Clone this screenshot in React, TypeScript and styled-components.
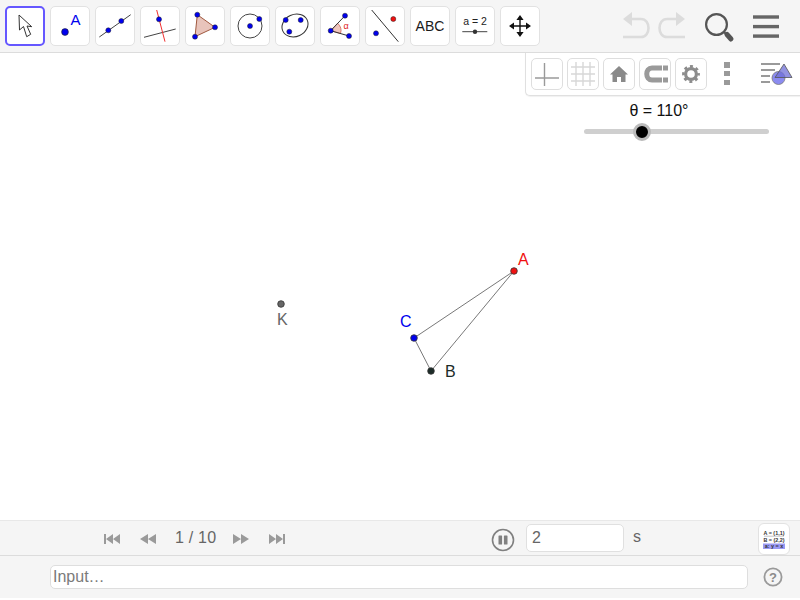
import React from 'react'
import styled, { createGlobalStyle } from 'styled-components'

const GlobalStyle = createGlobalStyle`
  html, body {
    margin: 0;
    padding: 0;
    background: #fff;
    font-family: 'Liberation Sans', Arial, sans-serif;
  }
  * {
    box-sizing: border-box;
  }
`

const Page = styled.div`
  width: 800px;
  height: 600px;
  display: flex;
  flex-direction: column;
  overflow: hidden;
`

const Toolbar = styled.div`
  height: 53px;
  flex: none;
  display: flex;
  align-items: flex-start;
  padding: 6px 0 0 5px;
  background: #f5f5f5;
  border-bottom: 1px solid #dcdcdc;
`

const ToolGroup = styled.div`
  display: flex;
  gap: 5px;
`

const ToolButton = styled.div<{ $active?: boolean }>`
  width: 40px;
  height: 40px;
  display: flex;
  align-items: center;
  justify-content: center;
  background: #fff;
  border-radius: 5px;
  border: ${p => (p.$active ? '2px solid #6557ff' : '1px solid #e2e2e2')};
  color: #1a1a1a;
  font-size: 14px;
  svg {
    display: block;
    flex: none;
  }
`

const ToolActions = styled.div`
  margin-left: 81px;
  display: flex;
  align-items: flex-start;
  svg {
    display: block;
  }
`

const SearchIcon = styled.svg`
  margin-left: 15px;
`

const MenuIcon = styled.svg`
  margin-left: 14px;
`

const Canvas = styled.div`
  position: relative;
  flex: 1;
  background: #fff;
`

const Drawing = styled.svg`
  position: absolute;
  left: 0;
  top: -53px;
  width: 800px;
  height: 600px;
  font-size: 16px;
`

const StylePanel = styled.div`
  position: absolute;
  top: 0;
  right: 0;
  width: 275px;
  height: 43px;
  display: flex;
  align-items: flex-start;
  gap: 4px;
  padding: 5px 0 0 5px;
  background: #fff;
  border-left: 1px solid #e0e0e0;
  border-bottom: 1px solid #e0e0e0;
  border-bottom-left-radius: 5px;
  box-shadow: 0 1px 1px rgba(0, 0, 0, 0.06);
`

const StyleButton = styled.div`
  width: 32px;
  height: 32px;
  border: 1px solid #dedede;
  border-radius: 5px;
  svg {
    display: block;
  }
`

const Kebab = styled.div`
  margin: 4px 0 0 13px;
  display: flex;
  flex-direction: column;
  gap: 3.4px;
`

const KebabDot = styled.span`
  width: 6px;
  height: 5.5px;
  background: #9a9a9a;
`

const ViewIcon = styled.svg`
  display: block;
  margin-left: 27px;
`

const SliderBox = styled.div`
  position: absolute;
  left: 584px;
  top: 48px;
  width: 185px;
  display: flex;
  flex-direction: column;
  align-items: center;
`

const SliderLabel = styled.div`
  font-size: 16px;
  line-height: 20px;
  color: #111;
  margin-left: -35px;
`

const SliderTrack = styled.div`
  position: relative;
  width: 100%;
  height: 5px;
  margin-top: 8px;
  background: #cfcfcf;
  border-radius: 3px;
`

const SliderThumb = styled.span`
  position: absolute;
  left: 49px;
  top: -6.5px;
  width: 18px;
  height: 18px;
  border-radius: 50%;
  background: #000;
  border: 3px solid #bbb;
`

const PlayerBar = styled.div`
  height: 36px;
  flex: none;
  display: flex;
  align-items: center;
  background: #f5f5f5;
  border-top: 1px solid #e8e8e8;
  border-bottom: 1px solid #dcdcdc;
  color: #666;
  font-size: 16px;
`

const StepGroup = styled.div`
  margin: 2px 0 0 104px;
  display: flex;
  align-items: center;
  gap: 20px;
  svg {
    display: block;
  }
`

const PageCount = styled.span`
  width: 41px;
  margin: -3px -3px 0 -1px;
  white-space: nowrap;
  letter-spacing: 0.2px;
`

const PauseIcon = styled.svg`
  display: block;
  margin: 4px 0 0 206px;
`

const SpeedInput = styled.input`
  width: 98px;
  height: 28px;
  margin: 0 0 0 11px;
  padding: 0 0 1px 5px;
  border: 1px solid #e0e0e0;
  border-radius: 5px;
  background: #fff;
  color: #666;
  font: 16px 'Liberation Sans', Arial, sans-serif;
  outline: none;
`

const SpeedUnit = styled.span`
  margin: -2px 0 0 9px;
`

const AlgebraButton = styled.div`
  margin: 2px 10px 0 auto;
  width: 32px;
  height: 32px;
  background: #fff;
  border: 1px solid #e2e2e2;
  border-radius: 6px;
  svg {
    display: block;
  }
`

const InputBar = styled.div`
  height: 42px;
  flex: none;
  display: flex;
  align-items: flex-start;
  padding: 9px 0 0 50px;
  background: #f5f5f5;
`

const InputField = styled.input`
  width: 698px;
  height: 24px;
  padding: 0 0 0 2px;
  border: 1px solid #dedede;
  border-radius: 5px;
  background: #fff;
  font: 16px 'Liberation Sans', Arial, sans-serif;
  outline: none;
  &::placeholder {
    color: #7a7a7a;
    opacity: 1;
  }
`

const HelpIcon = styled.svg`
  display: block;
  margin: 2px 0 0 15px;
`

const Spacer = styled.div`
  height: 2px;
  flex: none;
  background: #fff;
`

const BLUE = '#0000ee'

const Dot = ({ x, y, fill = BLUE, r = 2.5 }: { x: number; y: number; fill?: string; r?: number }) => (
  <circle cx={x} cy={y} r={r} fill={fill} stroke="#222" strokeWidth={0.5} />
)

const Icon: React.FC<{ children: React.ReactNode }> = ({ children }) => (
  <svg width="38" height="38" viewBox="1 1 38 38">
    {children}
  </svg>
)

const Step = ({ d }: { d: string }) => (
  <svg width="16" height="12" viewBox="0 0 16 12">
    <path d={d} fill="#9a9a9a" />
  </svg>
)

export default function App() {
  return (
    <Page>
      <GlobalStyle />
      <Toolbar>
        <ToolGroup>
          <ToolButton $active>
            <svg width="36" height="36" viewBox="2 2 36 36">
              <path
                d="M14 9 L14.5 24 L18.5 20.5 L21.7 30.7 L25.7 28.3 L22 20 L26.7 20.7 Z"
                fill="#fff"
                stroke="#333"
                strokeWidth="1"
              />
            </svg>
          </ToolButton>
          <ToolButton>
            <Icon>
              <circle cx="15" cy="26" r="3.4" fill={BLUE} stroke="#222" strokeWidth="0.6" />
              <text x="20.5" y="19.3" fontSize="15" fill={BLUE} fontFamily="Liberation Sans">
                A
              </text>
            </Icon>
          </ToolButton>
          <ToolButton>
            <Icon>
              <line x1="4.3" y1="31" x2="35.7" y2="8.7" stroke="#444" strokeWidth="1" />
              <Dot x={13.3} y={24.3} />
              <Dot x={26.3} y={15} />
            </Icon>
          </ToolButton>
          <ToolButton>
            <Icon>
              <line x1="4" y1="31.3" x2="35.7" y2="23" stroke="#444" strokeWidth="1" />
              <line x1="16.7" y1="4" x2="25" y2="35.7" stroke="#f03030" strokeWidth="1" />
              <Dot x={19} y={13.3} />
            </Icon>
          </ToolButton>
          <ToolButton>
            <Icon>
              <path d="M12.3 8.7 L30 21.3 L10 30.7 Z" fill="#e8c4bb" stroke="#a0593f" strokeWidth="1" />
              <Dot x={12.3} y={8.7} />
              <Dot x={30} y={21.3} />
              <Dot x={10} y={30.7} />
            </Icon>
          </ToolButton>
          <ToolButton>
            <Icon>
              <circle cx="20" cy="20" r="12" fill="none" stroke="#444" strokeWidth="1" />
              <Dot x={20} y={20} />
              <Dot x={29.3} y={13} />
            </Icon>
          </ToolButton>
          <ToolButton>
            <Icon>
              <ellipse
                cx="20"
                cy="19.5"
                rx="13.4"
                ry="11"
                transform="rotate(-25 20 19.5)"
                fill="none"
                stroke="#333"
                strokeWidth="1"
              />
              <Dot x={10.7} y={14} />
              <Dot x={25.7} y={14} />
              <Dot x={14.3} y={25.7} />
            </Icon>
          </ToolButton>
          <ToolButton>
            <Icon>
              <path d="M10.7 24.7 L17.6 17.2 Q22.6 22 20.4 27.5 Z" fill="#f0c6bd" stroke="#d06050" strokeWidth="0.8" />
              <path d="M25 9.7 L10.7 24.7 L29 30" fill="none" stroke="#333" strokeWidth="1" />
              <Dot x={10.7} y={24.7} />
              <Dot x={25} y={9.7} />
              <Dot x={29} y={30} />
              <text x="23.5" y="22.5" fontSize="9" fill="#e02020" fontFamily="Liberation Sans">
                α
              </text>
            </Icon>
          </ToolButton>
          <ToolButton>
            <Icon>
              <line x1="6.7" y1="4" x2="33.3" y2="35.7" stroke="#333" strokeWidth="1" />
              <Dot x={11} y={27.3} />
              <Dot x={28.3} y={13} fill="#f01010" />
            </Icon>
          </ToolButton>
          <ToolButton>ABC</ToolButton>
          <ToolButton>
            <Icon>
              <text x="20" y="19" fontSize="10.5" fill="#222" textAnchor="middle" fontFamily="Liberation Sans">
                a = 2
              </text>
              <line x1="7.3" y1="25.7" x2="32.3" y2="25.7" stroke="#444" strokeWidth="1" />
              <circle cx="20" cy="25.7" r="2.2" fill="#333" />
            </Icon>
          </ToolButton>
          <ToolButton>
            <Icon>
              <path d="M20 12 L20 28 M12 20 L28 20" fill="none" stroke="#111" strokeWidth="1.4" />
              <path
                d="M20 9 L23.6 14 L16.4 14 Z M20 31 L23.6 26 L16.4 26 Z M9 20 L14 16.4 L14 23.6 Z M31 20 L26 16.4 L26 23.6 Z"
                fill="#111"
              />
            </Icon>
          </ToolButton>
        </ToolGroup>
        <ToolActions>
          <svg width="66" height="40" viewBox="0 0 66 40" fill="none" stroke="#dcdcdc" strokeWidth="2.6">
            <path d="M2 13 L11 6 L11 20 Z" fill="#dcdcdc" stroke="none" />
            <path d="M9 13 H20 C30 13 30 31 20 31 H2" />
            <path d="M64 13 L55 6 L55 20 Z" fill="#dcdcdc" stroke="none" />
            <path d="M57 13 H46 C36 13 36 31 46 31 H64" />
          </svg>
          <SearchIcon width="36" height="40" viewBox="0 0 36 40" fill="none" stroke="#555">
            <circle cx="14.5" cy="18.5" r="10.4" strokeWidth="2.2" />
            <path d="M22 26 L25 29" strokeWidth="2.2" />
            <path d="M25 28.5 L29 33" strokeWidth="5" strokeLinecap="round" />
          </SearchIcon>
          <MenuIcon width="28" height="34" viewBox="0 0 28 34" fill="#666">
            <rect x="1" y="9.3" width="26" height="3.4" />
            <rect x="1" y="18.9" width="26" height="3.4" />
            <rect x="1" y="28.4" width="26" height="3.4" />
          </MenuIcon>
        </ToolActions>
      </Toolbar>

      <Canvas>
        <Drawing viewBox="0 0 800 600" fontFamily="Liberation Sans">
          <path d="M514 271 L414 338 L431 371 Z" fill="none" stroke="#555" strokeWidth="0.8" />
          <circle cx="514" cy="271" r="3.3" fill="#f01010" stroke="#333" strokeWidth="0.8" />
          <circle cx="414" cy="338" r="3.3" fill={BLUE} stroke="#333" strokeWidth="0.8" />
          <circle cx="431" cy="371" r="3.3" fill="#1c2b28" stroke="#333" strokeWidth="0.8" />
          <circle cx="281" cy="304" r="3.3" fill="#666" stroke="#333" strokeWidth="0.8" />
          <text x="518" y="265" fill="#f01010">A</text>
          <text x="400" y="327" fill={BLUE}>C</text>
          <text x="445" y="377" fill="#1c2b28">B</text>
          <text x="277" y="325" fill="#666">K</text>
        </Drawing>

        <StylePanel>
          <StyleButton>
            <svg width="30" height="30" viewBox="0 0 30 30" stroke="#9a9a9a" strokeWidth="1.4">
              <path d="M3 19 H27 M12.5 4 V27" fill="none" />
            </svg>
          </StyleButton>
          <StyleButton>
            <svg width="30" height="30" viewBox="0 0 30 30" stroke="#d8d8d8" strokeWidth="1.4">
              <path d="M3 8 H27 M3 15 H27 M3 22 H27 M8 3 V27 M15 3 V27 M22 3 V27" fill="none" />
            </svg>
          </StyleButton>
          <StyleButton>
            <svg width="30" height="30" viewBox="0 0 30 30" fill="#8a8a8a">
              <path d="M15 7 L24 15.5 L21.5 15.5 L21.5 23 L17 23 L17 18 L13 18 L13 23 L8.5 23 L8.5 15.5 L6 15.5 Z" />
            </svg>
          </StyleButton>
          <StyleButton>
            <svg width="30" height="30" viewBox="0 0 30 30">
              <path d="M22 9 H12 C5 9 5 21 12 21 H22" fill="none" stroke="#9a9a9a" strokeWidth="5" />
              <rect x="23" y="6.5" width="5" height="5" fill="#9a9a9a" />
              <rect x="23" y="18.5" width="5" height="5" fill="#9a9a9a" />
            </svg>
          </StyleButton>
          <StyleButton>
            <svg width="30" height="30" viewBox="0 0 30 30" fill="none">
              <circle cx="15" cy="15" r="5.4" stroke="#8c8c8c" strokeWidth="3.2" />
              <circle
                cx="15"
                cy="15"
                r="7.6"
                stroke="#8c8c8c"
                strokeWidth="2.6"
                strokeDasharray="3 3"
                strokeDashoffset="1.5"
              />
            </svg>
          </StyleButton>
          <Kebab>
            <KebabDot />
            <KebabDot />
            <KebabDot />
          </Kebab>
          <ViewIcon width="32" height="32" viewBox="0 0 32 32">
            <path d="M0 6 H19 M0 12 H14 M0 18 H9 M0 24 H9" stroke="#9a9a9a" strokeWidth="2" fill="none" />
            <circle cx="17.5" cy="20" r="6.5" fill="#8b8bf0" stroke="#777" strokeWidth="0.8" />
            <path d="M23 6 L31 19.5 L14 19.5 Z" fill="#6f6fd8" fillOpacity="0.75" stroke="#555" strokeWidth="0.8" />
          </ViewIcon>
        </StylePanel>

        <SliderBox>
          <SliderLabel>θ = 110°</SliderLabel>
          <SliderTrack>
            <SliderThumb />
          </SliderTrack>
        </SliderBox>
      </Canvas>

      <PlayerBar>
        <StepGroup>
          <Step d="M0 1 H2 V11 H0 Z M2 6 L9 1 V11 Z M9 6 L16 1 V11 Z" />
          <Step d="M0 6 L8 1 V11 Z M8 6 L16 1 V11 Z" />
          <PageCount>1 / 10</PageCount>
          <Step d="M0 1 L8 6 L0 11 Z M8 1 L16 6 L8 11 Z" />
          <Step d="M0 1 L7 6 L0 11 Z M7 1 L14 6 L7 11 Z M14 1 H16 V11 H14 Z" />
        </StepGroup>
        <PauseIcon width="24" height="24" viewBox="0 0 24 24">
          <circle cx="12" cy="12" r="10.5" fill="none" stroke="#808080" strokeWidth="1.6" />
          <rect x="7.5" y="7.5" width="3.6" height="9" rx="0.6" fill="#808080" />
          <rect x="12.9" y="7.5" width="3.6" height="9" rx="0.6" fill="#808080" />
        </PauseIcon>
        <SpeedInput value="2" readOnly />
        <SpeedUnit>s</SpeedUnit>
        <AlgebraButton>
          <svg width="30" height="30" viewBox="0 0 30 30" fontFamily="Liberation Sans" fontWeight="700">
            <text x="15" y="11" fontSize="5.4" fill="#333" textAnchor="middle">A = (1,1)</text>
            <line x1="5" y1="12.2" x2="25" y2="12.2" stroke="#888" strokeWidth="0.5" />
            <text x="15" y="17.5" fontSize="5.4" fill="#333" textAnchor="middle">B = (2,2)</text>
            <rect x="4" y="19.5" width="22" height="5.5" fill="#9a9af5" />
            <text x="15" y="24" fontSize="5.4" fill="#333" textAnchor="middle">a: y = x</text>
          </svg>
        </AlgebraButton>
      </PlayerBar>

      <InputBar>
        <InputField placeholder="Input…" />
        <HelpIcon width="20" height="20" viewBox="0 0 20 20">
          <circle cx="10" cy="10" r="8.6" fill="none" stroke="#9a9a9a" strokeWidth="1.8" />
          <text x="10" y="15" fontSize="13" fontWeight="700" fill="#8a8a8a" textAnchor="middle" fontFamily="Liberation Sans">
            ?
          </text>
        </HelpIcon>
      </InputBar>
      <Spacer />
    </Page>
  )
}
